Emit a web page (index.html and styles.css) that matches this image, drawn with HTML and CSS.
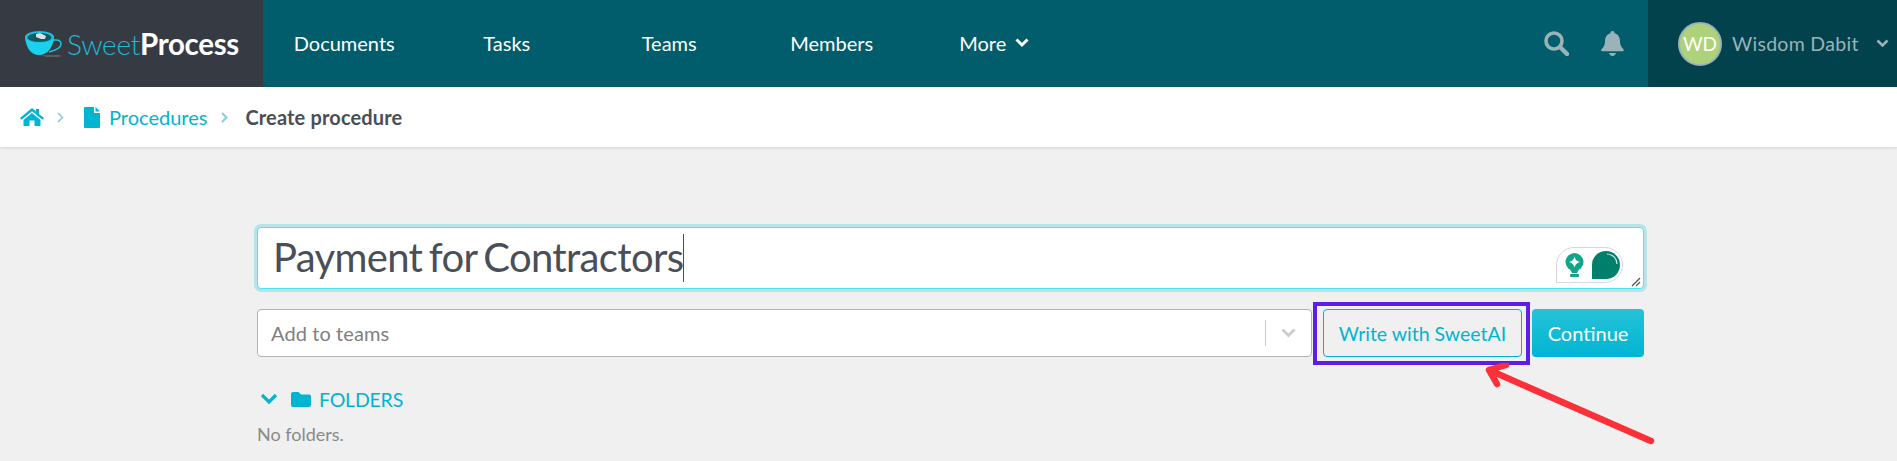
FILE: index.html
```html
<!DOCTYPE html>
<html lang="en">
<head>
    <meta charset="UTF-8">
    <title>Create procedure</title>
    <link rel="stylesheet" href="styles.css">
</head>
<body>
    <header class="topbar">
        <a class="logo">
            <svg class="logo-cup" width="37" height="26" viewBox="0 0 37 26">
                <path d="M17 24 h16 q3 0 3 1 q0 1-3 1 h-12z" fill="#5a5e63"/>
                <path d="M27 9 h4 q5 0 5 4 q0 5-12 8" fill="none" stroke="#19c5e0" stroke-width="1.500"/>
                <path d="M0 6 C1 17 6 24 14 24 C23 24 28 16 29 6z" fill="#19d3ee"/>
                <ellipse cx="14.500" cy="6" rx="14.500" ry="6" fill="#19c5e0"/>
                <ellipse cx="14.500" cy="6.500" rx="12" ry="4.500" fill="#0b5c69"/>
                <path d="M11 3 l4-1 l6 3 l-1 3 l-4 0 l-5-2z" fill="#d8e2e4"/>
            </svg>
            <span class="logo-text"><span class="logo-sweet">Sweet</span><span class="logo-process">Process</span></span>
        </a>
        <nav class="nav">
            <a class="nav-item">Documents</a>
            <a class="nav-item">Tasks</a>
            <a class="nav-item">Teams</a>
            <a class="nav-item">Members</a>
            <a class="nav-item">More
                <svg class="nav-chevron" width="14" height="10" viewBox="0 0 14 10"><path d="M1.500 1.500 L7 7 L12.500 1.500" fill="none" stroke="#fff" stroke-width="3"/></svg>
            </a>
        </nav>
        <div class="top-icons">
            <svg width="25" height="25" viewBox="0 0 25 25"><circle cx="10" cy="10" r="8" fill="none" stroke="#99b3b8" stroke-width="3.600"/><path d="M16 16 L23 23" stroke="#99b3b8" stroke-width="4.400" stroke-linecap="round"/></svg>
            <svg width="23" height="25" viewBox="0 0 23 25"><path d="M11.500 0 a2 2 0 0 1 2 2.300 c4 1 5.500 4.500 5.500 8 c0 4 1.500 6 3.500 8 q1 1.700-1 2 H1.500 q-2-.3-1-2 c2-2 3.500-4 3.500-8 c0-3.500 1.500-7 5.500-8 a2 2 0 0 1 2-2.300z M8 22 h7 q-1 3-3.500 3 t-3.500-3z" fill="#99b3b8"/></svg>
        </div>
        <div class="user">
            <span class="avatar">WD</span>
            <span class="user-name">Wisdom Dabit</span>
            <svg width="13" height="9" viewBox="0 0 13 9"><path d="M1.500 1.500 L6.500 6.500 L11.500 1.500" fill="none" stroke="#99b3b8" stroke-width="2.600"/></svg>
        </div>
    </header>

    <div class="crumbs">
        <svg class="crumb-home" width="24" height="18" viewBox="0 0 24 18"><path d="M12 0 L16 3.500 V1 h3 V6 L24 10 L22.500 11.800 L12 3.200 L1.500 11.800 L0 10z M12 5 L20.500 12 V18 H14.500 V12.500 H9.500 V18 H3.500 V12z" fill="#00b5d1"/></svg>
        <svg class="crumb-sep" width="7" height="11" viewBox="0 0 7 11"><path d="M1 1 L5.500 5.500 L1 10" fill="none" stroke="#8fc9d3" stroke-width="1.600"/></svg>
        <svg class="crumb-doc" width="16" height="21" viewBox="0 0 16 21"><path d="M1 0 H10 V6 H16 V20 a1 1 0 0 1-1 1 H1 a1 1 0 0 1-1-1 V1 a1 1 0 0 1 1-1z M11.500 0 L16 4.500 H11.500z" fill="#00b5d1"/></svg>
        <a class="crumb-link">Procedures</a>
        <svg class="crumb-sep2" width="7" height="11" viewBox="0 0 7 11"><path d="M1 1 L5.500 5.500 L1 10" fill="none" stroke="#8fc9d3" stroke-width="2"/></svg>
        <span class="crumb-current">Create procedure</span>
    </div>

    <main class="main">
        <div class="title-box">
            <span class="title-text">Payment for Contractors</span><span class="caret"></span>
            <div class="pill">
                <svg width="19" height="24" viewBox="0 0 19 24"><circle cx="9.500" cy="9" r="9" fill="#13a58a"/><path d="M9.500 3.500 Q10.500 8 15 9 Q10.500 10 9.500 14.500 Q8.500 10 4 9 Q8.500 8 9.500 3.500z" fill="#fff"/><path d="M5 16 h9 l-2 4 h-5z" fill="#13a58a"/><rect x="5" y="21" width="9" height="3" rx="1" fill="#13a58a"/></svg>
                <svg width="28" height="28" viewBox="0 0 28 28"><path d="M14 0 A14 14 0 0 1 28 14 A14 14 0 0 1 14 28 H0 V14 A14 14 0 0 1 14 0z" fill="#007f6d"/><path d="M15 3 A10 10 0 0 1 25 13" fill="none" stroke="#cfe7e2" stroke-width="1.200"/></svg>
            </div>
            <svg class="grip" width="10" height="10" viewBox="0 0 10 10"><path d="M1 9 L9 1 M5 9 L9 5" stroke="#555" stroke-width="1.300"/></svg>
        </div>

        <div class="action-row">
            <div class="team-select">
                <span class="team-placeholder">Add to teams</span>
                <span class="team-sep"></span>
                <svg width="15" height="10" viewBox="0 0 15 10"><path d="M1.500 1.500 L7.500 7.500 L13.500 1.500" fill="none" stroke="#ccc" stroke-width="2.800"/></svg>
            </div>
            <div class="ai-wrap">
                <a class="btn-ai">Write with SweetAI</a>
                <span class="ai-frame"></span>
            </div>
            <a class="btn-continue">Continue</a>
        </div>

        <div class="folders-head">
            <svg width="18" height="12" viewBox="0 0 18 12"><path d="M2 2 L9 9 L16 2" fill="none" stroke="#00b5d1" stroke-width="3.200"/></svg>
            <svg width="20" height="15" viewBox="0 0 20 15"><path d="M2 0 H7.500 L10 2.500 H18 a2 2 0 0 1 2 2 V13 a2 2 0 0 1-2 2 H2 a2 2 0 0 1-2-2 V2 a2 2 0 0 1 2-2z" fill="#00b5d1"/></svg>
            <span class="folders-label">FOLDERS</span>
        </div>
        <p class="no-folders">No folders.</p>
    </main>

    <svg class="arrow" width="180" height="90" viewBox="0 0 180 90"><path d="M168 78 L6 7 M6 7 L23 2 M6 7 L14 21" fill="none" stroke="#fb3038" stroke-width="6.500" stroke-linecap="round"/></svg>
</body>
</html>
```

FILE: styles.css
```css
*{padding: 0;margin: 0;box-sizing: border-box;}
html,body{height: 100%;overflow: hidden;}
body{
    background: #f0f0f0;
    font-family: Lato, "Open Sans", sans-serif;
    position: relative;
}
a{color: inherit;text-decoration: none;}

.topbar{
    height: 87px;
    display: flex;
    background: #015d6b;
    color: #fff;
}
.logo{
    width: 263px;
    background: #363a43;
    display: flex;
    align-items: center;
    padding-left: 25px;
    gap: 5px;
}
.logo-text{font-size: 28px;letter-spacing: -0.3px;}
.logo-sweet{font-weight: 300;color: #19bcd8;}
.logo-process{font-weight: 700;font-size: 29.500px;color: #fff;}

.nav{display: flex;}
.nav-item{
    width: 162.500px;
    display: flex;
    align-items: center;
    justify-content: center;
    gap: 9px;
    padding-bottom: 2px;
    font-size: 20px;
}
.nav-chevron{margin-top: 1px;}

.top-icons{
    margin-left: auto;
    display: flex;
    align-items: center;
    gap: 32px;
    padding-right: 24px;
}
.user{
    width: 249px;
    background: #02424c;
    display: flex;
    align-items: center;
    padding-left: 30px;
    color: #99b3b8;
}
.avatar{
    width: 44px;
    height: 44px;
    border-radius: 50%;
    background: #aed27a;
    border: 2px solid #99b3b8;
    color: #fff;
    font-size: 19px;
    display: flex;
    align-items: center;
    justify-content: center;
}
.user-name{
    margin-left: 10px;
    margin-right: 17px;
    font-size: 19.500px;
    letter-spacing: 0.3px;
}

.crumbs{
    height: 60px;
    background: #fff;
    box-shadow: 0 1px 3px rgba(0,0,0,.12);
    display: flex;
    align-items: center;
    padding-left: 20px;
    font-size: 20px;
}
.crumb-sep{margin-left: 13px;}
.crumb-doc{margin-left: 20px;}
.crumb-link{margin-left: 9px;color: #00b5d1;}
.crumb-sep2{margin-left: 14px;}
.crumb-current{margin-left: 17px;color: #4a4e57;font-weight: 700;letter-spacing: 0.150px;}

.main{padding: 80px 0 0 257px;width: 1644px;}

.title-box{
    position: relative;
    height: 62px;
    background: #fff;
    border: 1px solid #4fe3f3;
    border-radius: 4px;
    box-shadow: 0 0 0 3px #b7e3e9;
    padding: 6px 0 0 15px;
    display: flex;
    align-items: flex-start;
}
.title-text{
    font-size: 40px;
    line-height: 46px;
    letter-spacing: -0.650px;
    word-spacing: -3px;
    color: #4a4e57;
}
.caret{width: 1px;height: 48px;background: #4a4e57;}
.pill{
    position: absolute;
    right: 20px;
    bottom: 5px;
    width: 67px;
    height: 36px;
    background: #fff;
    border: 1px solid #d6d6e2;
    border-radius: 18px 18px 18px 0;
    display: flex;
    align-items: center;
    gap: 8px;
    padding-left: 8px;
}
.grip{position: absolute;right: 2px;bottom: 1px;}

.action-row{
    display: flex;
    margin-top: 20px;
    height: 48px;
}
.team-select{
    width: 1055px;
    background: #fff;
    border: 1px solid #b3b3b3;
    border-radius: 4px;
    display: flex;
    align-items: center;
    padding: 0 15px 0 13px;
}
.team-placeholder{font-size: 20px;letter-spacing: 0.1px;color: #808080;}
.team-sep{margin-left: auto;margin-right: 15px;width: 1px;height: 26px;background: #ccc;}
.ai-wrap{position: relative;margin-left: 11px;}
.btn-ai{
    display: flex;
    align-items: center;
    justify-content: center;
    width: 199px;
    height: 48px;
    border: 1px solid #00b5d1;
    border-radius: 4px;
    color: #00b5d1;
    font-size: 19.500px;
}
.ai-frame{
    position: absolute;
    left: -10px;
    top: -7px;
    width: 217px;
    height: 63px;
    border: 4px solid #5b1fe6;
}
.btn-continue{
    margin-left: 10px;
    width: 112px;
    display: flex;
    align-items: center;
    justify-content: center;
    border-radius: 4px;
    background: linear-gradient(#26c2d9,#00b5d1);
    color: #fff;
    font-size: 20px;
}

.folders-head{
    display: flex;
    align-items: center;
    margin-top: 30px;
    padding-left: 3px;
    height: 24px;
    color: #00b5d1;
    font-size: 19.500px;
}
.folders-head svg + svg{margin-left: 13px;}
.folders-label{margin-left: 8px;letter-spacing: -0.2px;}
.no-folders{
    margin-top: 12px;
    font-size: 18px;
    color: #8a8a8a;
}

.arrow{position: absolute;left: 1483px;top: 363px;}
```
